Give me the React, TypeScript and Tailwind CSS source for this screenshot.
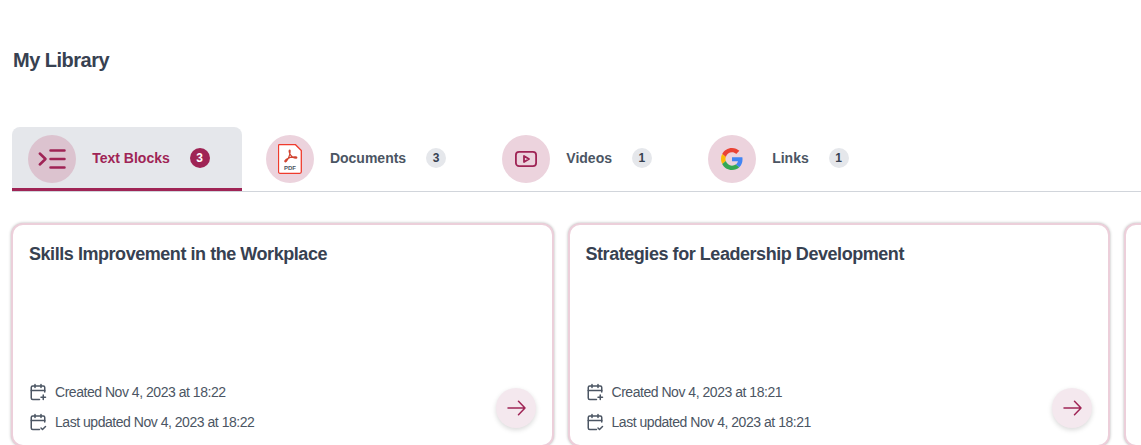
const PRIMARY = "#9f2455";

function CalendarIcon({ kind }: { kind: "plus" | "check" }) {
  return (
    <svg width="18" height="18" viewBox="0 0 24 24" fill="none" stroke="#4b5563" strokeWidth="2" strokeLinecap="round" strokeLinejoin="round" className="shrink-0">
      <path d="M21 12V6a2 2 0 0 0-2-2H5a2 2 0 0 0-2 2v14a2 2 0 0 0 2 2h9" />
      <path d="M16 2v4M8 2v4M3 10h18" />
      {kind === "plus" ? <path d="M19 16v6M16 19h6" /> : <path d="m16 20 2 2 4-4" />}
    </svg>
  );
}

function TextBlocksIcon() {
  return (
    <svg width="28" height="28" viewBox="0 0 28 28" fill="none" stroke={PRIMARY} strokeWidth="2.500" strokeLinecap="round" strokeLinejoin="round">
      <path d="m1.800 8.500 5.700 5.500-5.700 5.500" />
      <path d="M12.500 5.500h14M12.500 14h14M12.500 22.500h14" />
    </svg>
  );
}

function PdfIcon() {
  return (
    <svg width="24" height="30" viewBox="0 0 24 30" fill="none">
      <path d="M2 .7h15.500l5.800 5.800v21.300a1.500 1.500 0 0 1-1.500 1.500h-19.800a1.500 1.500 0 0 1-1.500-1.500v-26a1.500 1.500 0 0 1 1.500-1.500Z" fill="#fff" stroke="#ef3b2d" strokeWidth="1.300" />
      <path d="M11.500 6.200c-.9.800.2 3.300 1.100 4.800s3.200 3 5.400 3.200c1.100 0 1.100-1.200 0-1.300-2.700-.2-7.200.7-9.600 2.300-1.300 1-2.200 2.400-1.100 2.600 1.300.1 3.500-4.200 4.300-7 .5-2 .8-5.400-.1-4.600Z" stroke="#d0432f" strokeWidth="1.200" strokeLinejoin="round" />
      <text x="12" y="26" textAnchor="middle" fontSize="6" fontWeight="700" fill="#4b5563" fontFamily="'Liberation Sans', sans-serif">PDF</text>
    </svg>
  );
}

function VideoIcon() {
  return (
    <svg width="24" height="24" viewBox="0 0 24 24" fill="none" stroke={PRIMARY} strokeWidth="1.800" strokeLinecap="round" strokeLinejoin="round">
      <rect x="1.900" y="4.900" width="20.200" height="14.200" rx="3.200" />
      <path d="m10 9 5 3-5 3Z" />
    </svg>
  );
}

function GoogleIcon() {
  return (
    <svg width="22" height="22" viewBox="0 0 48 48">
      <path fill="#EA4335" d="M24 9.500c3.540 0 6.710 1.220 9.210 3.600l6.850-6.850C35.900 2.380 30.470 0 24 0 14.620 0 6.510 5.380 2.560 13.220l7.980 6.190C12.430 13.720 17.740 9.500 24 9.500z" />
      <path fill="#4285F4" d="M46.980 24.550c0-1.570-.15-3.090-.38-4.550H24v9.020h12.940c-.58 2.960-2.260 5.480-4.780 7.180l7.730 6c4.510-4.180 7.090-10.360 7.090-17.650z" />
      <path fill="#FBBC05" d="M10.530 28.590c-.48-1.450-.76-2.990-.76-4.590s.27-3.140.76-4.590l-7.980-6.190C.92 16.460 0 20.120 0 24c0 3.880.92 7.540 2.560 10.780l7.970-6.190z" />
      <path fill="#34A853" d="M24 48c6.480 0 11.930-2.130 15.890-5.810l-7.730-6c-2.150 1.450-4.920 2.300-8.160 2.300-6.260 0-11.570-4.220-13.470-9.910l-7.980 6.190C6.510 42.620 14.620 48 24 48z" />
    </svg>
  );
}

function Tab({ label, count, icon, active }: { label: string; count: string; icon: React.ReactNode; active?: boolean }) {
  return (
    <div className={active ? "flex items-center h-[64px] pl-4 pr-8 rounded-t-lg bg-[#e5e7eb] border-b-[3px] border-[#9f2455]" : "flex items-center h-[64px] pl-4 pr-8 rounded-t-lg border-b-[3px] border-transparent"}>
      <div className={active ? "mt-[3px] w-12 h-12 rounded-full bg-[#dcc3cf] flex items-center justify-center" : "mt-[3px] w-12 h-12 rounded-full bg-[#ecd3dd] flex items-center justify-center"}>
        {icon}
      </div>
      <span className={active ? "ml-[16.2px] text-sm font-bold text-[#9f2455]" : "ml-[16.2px] text-sm font-bold text-[#4b5563]"}>{label}</span>
      <span className={active ? "ml-[19.9px] w-5 h-5 rounded-full bg-[#9f2455] text-white text-xs font-bold flex items-center justify-center" : "ml-[19.9px] w-5 h-5 rounded-full bg-[#e5e7eb] text-[#374151] text-xs font-bold flex items-center justify-center"}>{count}</span>
    </div>
  );
}

function Card({ title, time }: { title?: string; time?: string }) {
  return (
    <div className="w-[542.5px] h-[224px] shrink-0 rounded-xl border-2 border-[#eccfda] shadow-[0_0_3px_rgba(0,0,0,0.3)] bg-white pt-[15px] pl-[16px] pr-[16px] pb-[13px] flex flex-col justify-between">
      {title && <h3 className="text-lg leading-7 font-bold tracking-tight text-[#374151]">{title}</h3>}
      {time && (
        <div className="flex items-end justify-between">
          <div className="flex flex-col gap-[10px]">
            <div className="flex items-center gap-2 h-5 text-sm tracking-[-0.47px] text-[#4b5563]">
              <CalendarIcon kind="plus" />
              <span>Created Nov 4, 2023 at {time}</span>
            </div>
            <div className="flex items-center gap-2 h-5 text-sm tracking-[-0.47px] text-[#4b5563]">
              <CalendarIcon kind="check" />
              <span>Last updated Nov 4, 2023 at {time}</span>
            </div>
          </div>
          <div className="w-10 h-10 mb-1 rounded-full bg-[#f4e8ee] shadow-[0_2px_5px_rgba(0,0,0,0.15)] flex items-center justify-center">
            <svg width="24" height="24" viewBox="0 0 24 24" fill="none" stroke={PRIMARY} strokeWidth="1.500" strokeLinecap="round" strokeLinejoin="round">
              <path d="M4 12h17M14.500 5.200 21 12l-6.500 6.800" />
            </svg>
          </div>
        </div>
      )}
    </div>
  );
}

export default function App() {
  return (
    <div className="w-[1141px] h-[445px] overflow-hidden bg-white font-['Liberation_Sans',sans-serif]">
      <h1 className="pt-[46px] pl-[13px] text-xl leading-7 font-bold tracking-tight text-[#374151]">My Library</h1>
      <div className="mt-[53px] ml-3 flex gap-[8.1px]">
        <Tab label="Text Blocks" count="3" icon={<TextBlocksIcon />} active />
        <Tab label="Documents" count="3" icon={<PdfIcon />} />
        <Tab label="Videos" count="1" icon={<VideoIcon />} />
        <Tab label="Links" count="1" icon={<GoogleIcon />} />
      </div>
      <div className="ml-3 h-px bg-[#d1d5db]" />
      <div className="mt-[31px] ml-[11px] flex gap-[14px]">
        <Card title="Skills Improvement in the Workplace" time="18:22" />
        <Card title="Strategies for Leadership Development" time="18:21" />
        <Card />
      </div>
    </div>
  );
}
